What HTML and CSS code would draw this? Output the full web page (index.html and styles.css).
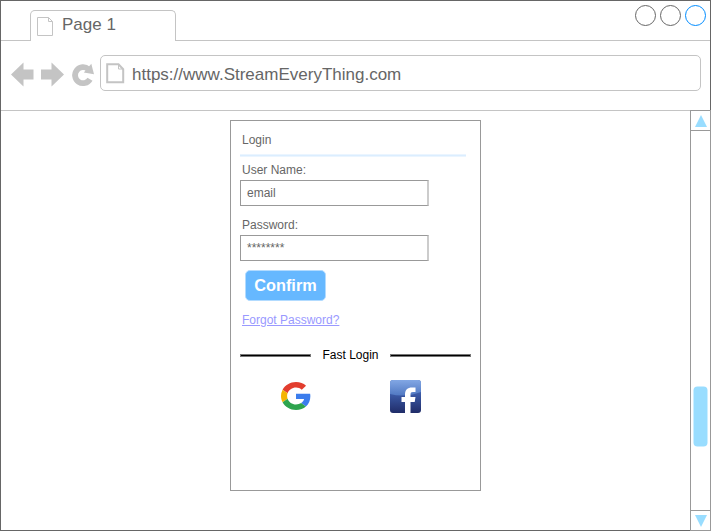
FILE: index.html
```html
<!DOCTYPE html>
<html lang="en">
<head>
<meta charset="utf-8">
<title>Page 1</title>
<link rel="stylesheet" href="styles.css">
</head>
<body>
<div class="window">
  <header class="tabstrip">
    <div class="strip-start"></div>
    <div class="tab">
      <svg class="tab-icon" width="17" height="20" viewBox="0 0 17 20"><path d="M.5.5h11l4 4v14H.5zM11.500.5v4h4" fill="none" stroke="#c4c4c4"/></svg>
      <span>Page 1</span>
    </div>
    <div class="strip-end">
      <svg width="72" height="22" viewBox="0 0 72 22" fill="none" stroke="#666"><circle cx="10.500" cy="10.500" r="10"/><circle cx="35.500" cy="10.500" r="10"/><circle cx="60.500" cy="10.500" r="10" stroke="#008cff"/></svg>
    </div>
  </header>
  <nav class="toolbar">
    <svg class="nav-icons" width="84" height="26" viewBox="0 0 84 26">
      <path d="M0 12.500 12.500.5v7H22.500v10h-10v7zM53 12.500 40.500.5v7H30v10h10.500v7z" fill="#c4c4c4"/>
      <path d="M79 17.200A8 8 0 1 1 77.500 7.300" fill="none" stroke="#c4c4c4" stroke-width="5.800"/>
      <path d="M72.800 10.500 80.300 1.800 83 12.300z" fill="#c4c4c4"/>
    </svg>
    <div class="address">
      <svg class="page-icon" width="19" height="21" viewBox="0 0 19 21"><path d="M1.200 1.200h11.300l4.700 5v13.100h-16z" fill="none" stroke="#c4c4c4" stroke-width="2"/><path d="M12.500 1.500v4.500h4.500" fill="none" stroke="#c4c4c4"/></svg>
      <span>https://www.StreamEveryThing.com</span>
    </div>
  </nav>
  <div class="viewport">
    <main class="page">
      <form class="card">
        <div class="title">Login</div>
        <div class="rule"></div>
        <label class="label" for="user">User Name:</label>
        <div class="field" id="user">email</div>
        <label class="label label-pass" for="pass">Password:</label>
        <div class="field field-pass" id="pass">********</div>
        <div class="confirm">Confirm</div>
        <a class="forgot">Forgot Password?</a>
        <div class="fast"><i class="bar"></i><span>Fast Login</span><i class="bar bar-end"></i></div>
        <div class="logos">
          <svg class="google" width="30" height="28" viewBox="0 0 48 48" preserveAspectRatio="none">
            <path fill="#e23d2e" d="M24 9.500c3.540 0 6.710 1.220 9.210 3.600l6.850-6.850C35.900 2.380 30.470 0 24 0 14.620 0 6.510 5.380 2.560 13.220l7.980 6.190C12.430 13.720 17.740 9.500 24 9.500z"/>
            <path fill="#3b7ded" d="M46.980 24.550c0-1.570-.15-3.090-.38-4.550H24v9.020h12.940c-.58 2.960-2.260 5.480-4.780 7.180l7.730 6c4.510-4.180 7.090-10.360 7.090-17.650z"/>
            <path fill="#f4b400" d="M10.530 28.590A14.500 14.500 0 0 1 9.770 24c0-1.600.27-3.140.76-4.590l-7.980-6.190A23.900 23.900 0 0 0 0 24c0 3.880.92 7.540 2.560 10.780z"/>
            <path fill="#2da44e" d="M24 48c6.480 0 11.930-2.130 15.890-5.810l-7.730-6c-2.150 1.450-4.920 2.300-8.160 2.300-6.260 0-11.570-4.220-13.470-9.910l-7.980 6.190C6.510 42.620 14.620 48 24 48z"/>
          </svg>
          <svg width="31" height="33" viewBox="0 0 31 33">
            <defs>
              <linearGradient id="base" x2="0" y2="1"><stop stop-color="#4e75bf"/><stop offset=".4" stop-color="#3c5ca9"/><stop offset="1" stop-color="#202c68"/></linearGradient>
              <linearGradient id="gloss" x2="0" y2="1"><stop stop-color="#82a7e4"/><stop offset="1" stop-color="#5078c2"/></linearGradient>
            </defs>
            <rect width="31" height="33" rx="3" fill="url(#base)"/>
            <path d="M3 0h25a3 3 0 0 1 3 3v9Q15 18 0 14V3a3 3 0 0 1 3-3z" fill="url(#gloss)"/>
            <path d="M15 33V22h-3.500v-5H15v-2.500C15 10 17.500 7.500 22 7.500h3.500V12H23c-2 0-2.500.8-2.500 2.500V17h5l-.8 5h-4.200v11z" fill="#fff"/>
          </svg>
        </div>
      </form>
    </main>
    <aside class="scrollbar">
      <div class="arrow arrow-up"><svg width="12" height="12" viewBox="0 0 12 12"><path d="M6 0l6 12H0z" fill="#99ddff"/></svg></div>
      <div class="track">
        <svg width="15" height="61" viewBox="0 0 15 61"><rect x=".5" y=".5" width="14" height="60" rx="4" fill="#99ddff"/></svg>
      </div>
      <div class="arrow arrow-down"><svg width="12" height="12" viewBox="0 0 12 12"><path d="M0 0h12L6 12z" fill="#99ddff"/></svg></div>
    </aside>
  </div>
</div>
</body>
</html>
```
FILE: styles.css
```css
* { box-sizing: border-box; }
body { margin: 0; background: #fff; font-family: "Liberation Sans", Arial, sans-serif; color: #666; overflow: hidden; }
svg { display: block; flex: none; }
.window { width: 711px; height: 531px; border: 1px solid #666; display: flex; flex-direction: column; }
.tabstrip { height: 40px; flex: none; display: flex; }
.strip-start { width: 29px; border-bottom: 1px solid #c4c4c4; }
.tab { width: 146px; height: 31px; margin-top: 9px; border: 1px solid #c4c4c4; border-bottom: 0; border-radius: 5px 5px 0 0; display: flex; font-size: 17px; line-height: 20px; }
.tab-icon { margin: 6px 8px 0 6px; }
.tab span { padding-top: 4px; }
.strip-end { flex: 1; border-bottom: 1px solid #c4c4c4; display: flex; justify-content: flex-end; padding: 4px 3px 0 0; }
.toolbar { height: 70px; flex: none; border-bottom: 1px solid #c4c4c4; display: flex; padding: 14px 9px 0 10px; }
.nav-icons { margin: 7px 5px 0 0; }
.address { flex: 1; height: 36px; border: 1px solid #c4c4c4; border-radius: 5px; display: flex; align-items: center; padding: 1px 0 0 5px; font-size: 17px; }
.address span { padding-top: 2px; }
.page-icon { margin-right: 7px; }
.viewport { flex: 1; min-height: 0; display: flex; }
.page { flex: 1; padding: 9px 0 0 229px; }
.card { width: 251px; height: 371px; border: 1px solid #999; padding: 12px 9px 0; display: flex; flex-direction: column; align-items: flex-start; font-size: 12px; line-height: 14px; }
.title { padding-left: 2px; }
.rule { width: 226px; height: 3px; margin: 7px 0 6px; background: #dbeeff; border: solid #ebf5ff; border-width: 1px 0; }
.label { padding-left: 2px; }
.field { width: 189px; height: 26px; margin-top: 3px; border: 1px solid #999; border-right: 2px solid #ccc; padding: 5px 6px; }
.label-pass { margin-top: 12px; }
.confirm { width: 81px; height: 31px; margin: 9px 0 0 5px; border: 1px solid #b2dbff; border-radius: 5px; background: #66b8ff; color: #fff; font-size: 16.300px; font-weight: bold; line-height: 29px; text-align: center; }
.forgot { margin: 12px 0 0 2px; color: #9999ff; text-decoration: underline; }
.fast { width: 231px; margin-top: 21px; display: flex; justify-content: space-between; align-items: center; color: #000; }
.bar { width: 71px; height: 3px; background: #000; border: 1px solid #777; }
.bar-end { width: 81px; }
.logos { display: flex; align-items: flex-start; gap: 79px; margin: 18px 0 0 41px; }
.google { margin-top: 2px; }
.scrollbar { width: 21px; margin: -1px -1px -1px 0; border: 1px solid #999; display: flex; flex-direction: column; }
.arrow { height: 20px; display: flex; justify-content: center; align-items: center; }
.arrow-up { border-bottom: 1px solid #999; }
.arrow-down { border-top: 1px solid #999; }
.track { flex: 1; padding: 255px 2px 0 2px; }
```
